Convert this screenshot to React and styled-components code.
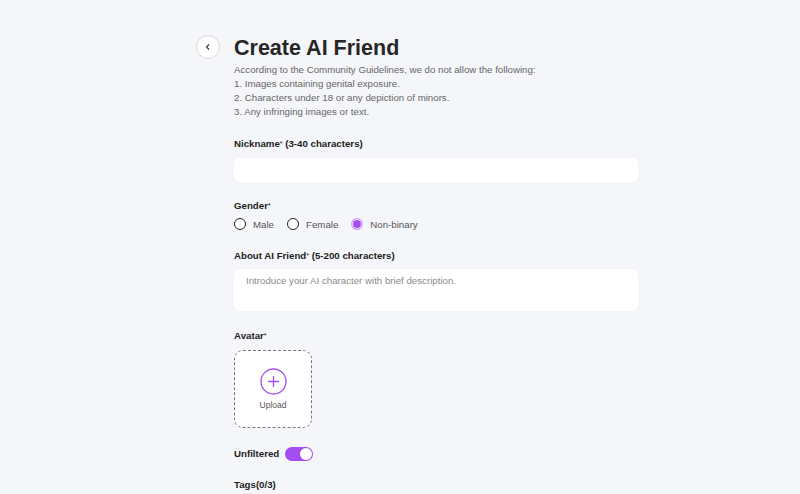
import styled, { createGlobalStyle } from "styled-components";

const GlobalStyle = createGlobalStyle`
  html, body {
    margin: 0;
    padding: 0;
    background: #f5f6fa;
    font-family: "Liberation Sans", Arial, sans-serif;
    color: #222;
  }
`;

const Page = styled.div`
  display: flex;
  justify-content: center;
  padding-top: 35px;
  min-height: 494px;
  box-sizing: border-box;
`;

const Layout = styled.div`
  display: flex;
  gap: 14px;
  margin-left: 34px;
`;

const BackButton = styled.button`
  width: 24px;
  height: 24px;
  border-radius: 50%;
  border: 1px solid #d4d6dc;
  background: #fff;
  display: flex;
  align-items: center;
  justify-content: center;
  padding: 0;
  flex-shrink: 0;
  cursor: pointer;
`;

const Form = styled.div`
  width: 404px;
  display: flex;
  flex-direction: column;
`;

const Title = styled.h1`
  margin: 0;
  font-size: 21.5px;
  line-height: 26px;
  font-weight: 700;
  color: #262626;
`;

const Notice = styled.div`
  margin-top: 2px;
  font-size: 9.7px;
  line-height: 14px;
  color: #666;
`;

const Field = styled.div`
  margin-top: ${(p) => p.$top}px;
  display: flex;
  flex-direction: column;
`;

const Label = styled.div`
  font-size: 9.7px;
  font-weight: 700;
  line-height: 14px;
  color: #222;
  .star {
    font-size: 7px;
    vertical-align: top;
    font-weight: 400;
  }
`;

const Input = styled.input`
  margin-top: 7px;
  height: 24px;
  border: none;
  border-radius: 6px;
  background: #fff;
  padding: 0 12px;
  font-family: inherit;
  font-size: 9.7px;
  outline: none;
`;

const TextArea = styled.textarea`
  margin-top: 6px;
  height: 42px;
  border: none;
  border-radius: 7px;
  background: #fff;
  padding: 5px 12px;
  box-sizing: border-box;
  resize: none;
  font-family: inherit;
  font-size: 9.7px;
  line-height: 14px;
  outline: none;
  &::placeholder {
    color: #8a8a8a;
  }
`;

const RadioRow = styled.div`
  margin-top: 5px;
  display: flex;
  gap: 13px;
`;

const RadioItem = styled.label`
  display: flex;
  align-items: center;
  gap: 7px;
  font-size: 9.7px;
  color: #555;
`;

const RadioDot = styled.span`
  width: 12px;
  height: 12px;
  border-radius: 50%;
  box-sizing: border-box;
  border: ${(p) => (p.$on ? "1.5px solid #cf9ff8" : "1.5px solid #222")};
  background: ${(p) => (p.$on ? "#a24ef0" : "#fff")};
  box-shadow: ${(p) => (p.$on ? "inset 0 0 0 1px #fff" : "none")};
`;

const UploadBox = styled.div`
  margin-top: 7px;
  width: 78px;
  height: 78px;
  box-sizing: border-box;
  border: 1px dashed #777;
  border-radius: 9px;
  background: #fff;
  display: flex;
  flex-direction: column;
  align-items: center;
  justify-content: center;
  gap: 5px;
  padding-bottom: 1px;
`;

const UploadText = styled.span`
  font-size: 8.5px;
  color: #555;
`;

const ToggleRow = styled.div`
  margin-top: 19px;
  display: flex;
  align-items: center;
  gap: 6px;
`;

const Switch = styled.span`
  width: 28px;
  height: 14px;
  border-radius: 7px;
  background: #a24ef0;
  display: flex;
  align-items: center;
  justify-content: flex-end;
  padding: 0 1px;
  box-sizing: border-box;
  &::after {
    content: "";
    width: 12px;
    height: 12px;
    border-radius: 50%;
    background: #fff;
  }
`;

const genders = [
  { name: "Male", on: false },
  { name: "Female", on: false },
  { name: "Non-binary", on: true },
];

export default function App() {
  return (
    <>
      <GlobalStyle />
      <Page>
        <Layout>
          <BackButton aria-label="Back">
            <svg width="8" height="8" viewBox="0 0 8 8">
              <path d="M5 1.5 L2.5 4 L5 6.5" fill="none" stroke="#333" strokeWidth="1.1" />
            </svg>
          </BackButton>
          <Form>
            <Title>Create AI Friend</Title>
            <Notice>
              According to the Community Guidelines, we do not allow the following:
              <br />1. Images containing genital exposure.
              <br />2. Characters under 18 or any depiction of minors.
              <br />3. Any infringing images or text.
            </Notice>

            <Field $top={18}>
              <Label>
                Nickname<span className="star">*</span> (3-40 characters)
              </Label>
              <Input />
            </Field>

            <Field $top={17}>
              <Label>
                Gender<span className="star">*</span>
              </Label>
              <RadioRow>
                {genders.map((g) => (
                  <RadioItem key={g.name}>
                    <RadioDot $on={g.on} />
                    {g.name}
                  </RadioItem>
                ))}
              </RadioRow>
            </Field>

            <Field $top={19}>
              <Label>
                About AI Friend<span className="star">*</span> (5-200 characters)
              </Label>
              <TextArea placeholder="Introduce your AI character with brief description." />
            </Field>

            <Field $top={18}>
              <Label>
                Avatar<span className="star">*</span>
              </Label>
              <UploadBox>
                <svg width="27" height="27" viewBox="0 0 27 27">
                  <circle cx="13.5" cy="13.5" r="12.5" fill="none" stroke="#a24ef0" strokeWidth="1.3" />
                  <path d="M13.5 8 V19 M8 13.5 H19" stroke="#a24ef0" strokeWidth="1.3" />
                </svg>
                <UploadText>Upload</UploadText>
              </UploadBox>
            </Field>

            <ToggleRow>
              <Label>Unfiltered</Label>
              <Switch />
            </ToggleRow>

            <Field $top={17}>
              <Label>Tags(0/3)</Label>
            </Field>
          </Form>
        </Layout>
      </Page>
    </>
  );
}
